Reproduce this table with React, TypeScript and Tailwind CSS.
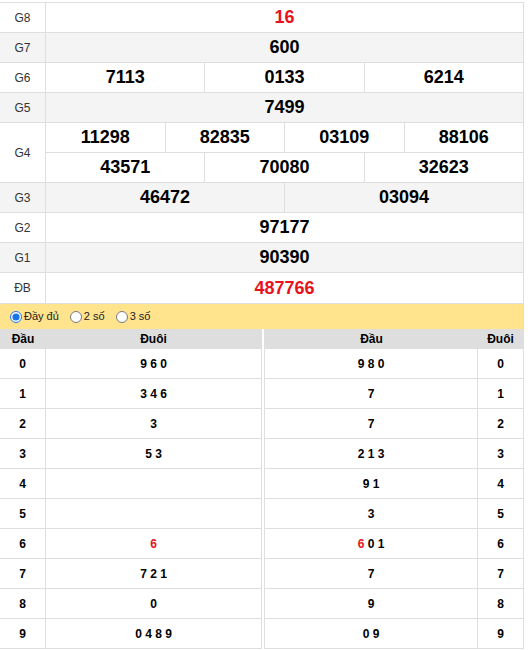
import React from "react";

type Prize = { label: string; rows: string[][]; red?: boolean; gray?: boolean };

const prizes: Prize[] = [
  { label: "G8", rows: [["16"]], red: true },
  { label: "G7", rows: [["600"]], gray: true },
  { label: "G6", rows: [["7113", "0133", "6214"]] },
  { label: "G5", rows: [["7499"]], gray: true },
  { label: "G4", rows: [["11298", "82835", "03109", "88106"], ["43571", "70080", "32623"]] },
  { label: "G3", rows: [["46472", "03094"]], gray: true },
  { label: "G2", rows: [["97177"]] },
  { label: "G1", rows: [["90390"]], gray: true },
  { label: "ĐB", rows: [["487766"]], red: true },
];

// each digit list: [text, red?]
const dauDuoi: { d: string; tail: [string, boolean][]; head: [string, boolean][] }[] = [
  { d: "0", tail: [["9 6 0", false]], head: [["9 8 0", false]] },
  { d: "1", tail: [["3 4 6", false]], head: [["7", false]] },
  { d: "2", tail: [["3", false]], head: [["7", false]] },
  { d: "3", tail: [["5 3", false]], head: [["2 1 3", false]] },
  { d: "4", tail: [], head: [["9 1", false]] },
  { d: "5", tail: [], head: [["3", false]] },
  { d: "6", tail: [["6", true]], head: [["6", true], [" 0 1", false]] },
  { d: "7", tail: [["7 2 1", false]], head: [["7", false]] },
  { d: "8", tail: [["0", false]], head: [["9", false]] },
  { d: "9", tail: [["0 4 8 9", false]], head: [["0 9", false]] },
];

function Parts({ parts }: { parts: [string, boolean][] }) {
  return (
    <>
      {parts.map(([t, red], i) => (
        <span key={i} className={red ? "text-[#e8121c]" : ""}>{t}</span>
      ))}
    </>
  );
}

export default function App() {
  return (
    <div className="w-[528px] bg-white pt-[2px] font-['Liberation_Sans',Arial,sans-serif] text-black">
      <div className="w-[524px] border-t border-r border-[#dedede]">
        {prizes.map((p) => (
          <div key={p.label} className={`flex border-b border-[#dedede] ${p.gray ? "bg-[#f4f4f4]" : "bg-white"}`}>
            <div className="w-[46px] shrink-0 flex items-center justify-center border-r border-[#dedede] text-[12px] text-[#333]">
              {p.label}
            </div>
            <div className="flex-1 flex flex-col">
              {p.rows.map((r, ri) => (
                <div key={ri} className={`flex ${ri > 0 || p.label === "ĐB" ? "h-[30px]" : "h-[29px]"} ${ri > 0 ? "border-t border-[#dedede]" : ""}`}>
                  {r.map((n, ni) => (
                    <div
                      key={ni}
                      className={`flex-1 flex items-center justify-center text-[18px] font-bold ${ni > 0 ? "border-l border-[#dedede]" : ""} ${p.red ? "text-[#e8121c]" : ""}`}
                    >
                      {n}
                    </div>
                  ))}
                </div>
              ))}
            </div>
          </div>
        ))}
        <div className="flex items-center h-[25px] bg-[#ffe38d] pl-[10px] gap-[11px] text-[11px] text-[#222]">
          <label className="flex items-center gap-[2px]">
            <input type="radio" name="mode" defaultChecked className="m-0 w-[12px] h-[12px] accent-[#1a73e8]" />
            Đầy đủ
          </label>
          <label className="flex items-center gap-[2px]">
            <input type="radio" name="mode" className="m-0 w-[12px] h-[12px]" />
            2 số
          </label>
          <label className="flex items-center gap-[2px]">
            <input type="radio" name="mode" className="m-0 w-[12px] h-[12px]" />
            3 số
          </label>
        </div>
        <div className="flex gap-[2px] text-[12px] font-bold">
          <div className="w-[262px] border-r border-[#dedede]">
            <div className="flex h-[20px] bg-[#dedede]">
              <div className="w-[46px] flex items-center justify-center">Đầu</div>
              <div className="flex-1 flex items-center justify-center">Đuôi</div>
            </div>
            {dauDuoi.map((r) => (
              <div key={r.d} className="flex h-[30px] border-b border-[#dedede]">
                <div className="w-[46px] flex items-center justify-center border-r border-[#dedede]">{r.d}</div>
                <div className="flex-1 flex items-center justify-center whitespace-pre">
                  <Parts parts={r.tail} />
                </div>
              </div>
            ))}
          </div>
          <div className="flex-1 border-l border-[#dedede]">
            <div className="flex h-[20px] bg-[#dedede]">
              <div className="flex-1 flex items-center justify-center">Đầu</div>
              <div className="w-[45px] flex items-center justify-center">Đuôi</div>
            </div>
            {dauDuoi.map((r) => (
              <div key={r.d} className="flex h-[30px] border-b border-[#dedede]">
                <div className="flex-1 flex items-center justify-center whitespace-pre border-r border-[#dedede]">
                  <Parts parts={r.head} />
                </div>
                <div className="w-[45px] flex items-center justify-center">{r.d}</div>
              </div>
            ))}
          </div>
        </div>
      </div>
    </div>
  );
}
